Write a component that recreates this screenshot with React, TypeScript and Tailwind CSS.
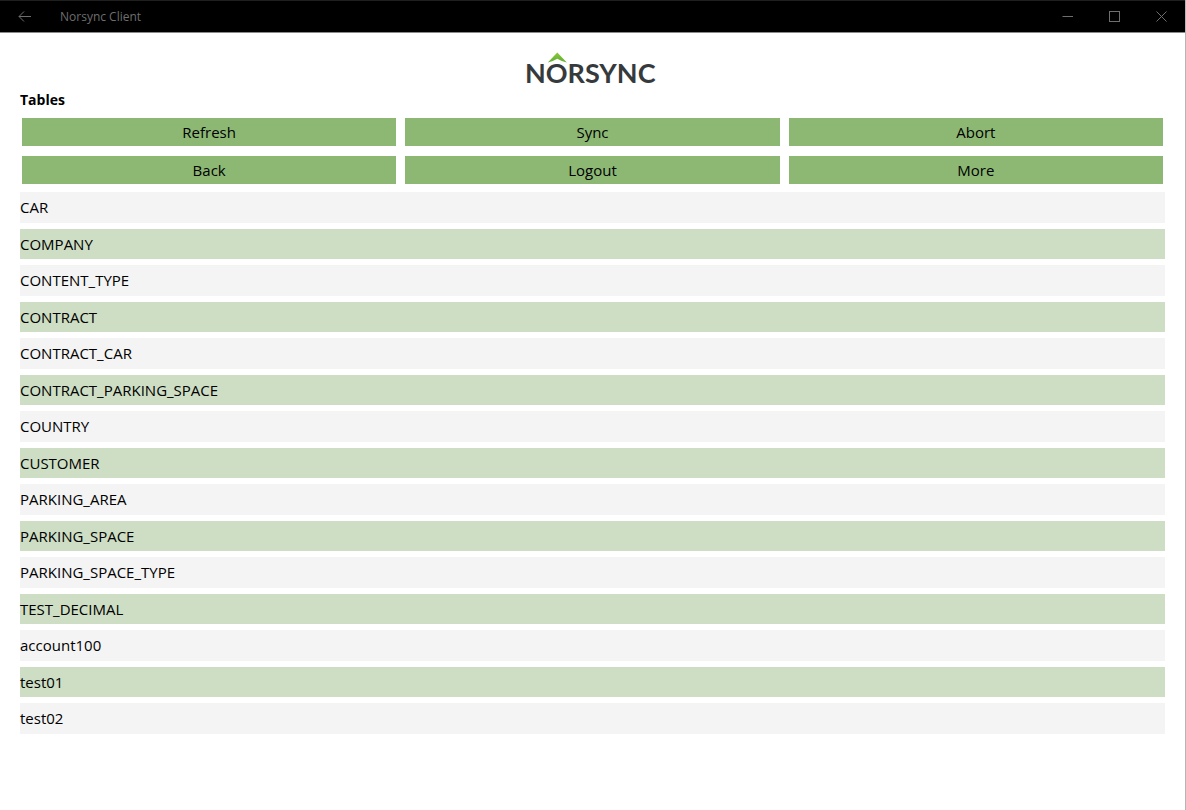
import React from 'react';

const actions = ['Refresh', 'Sync', 'Abort', 'Back', 'Logout', 'More'];

const tables = [
  'CAR',
  'COMPANY',
  'CONTENT_TYPE',
  'CONTRACT',
  'CONTRACT_CAR',
  'CONTRACT_PARKING_SPACE',
  'COUNTRY',
  'CUSTOMER',
  'PARKING_AREA',
  'PARKING_SPACE',
  'PARKING_SPACE_TYPE',
  'TEST_DECIMAL',
  'account100',
  'test01',
  'test02',
];

const TitleBar: React.FC = () => (
  <header className="flex h-[33px] items-center border-t border-b border-t-[#1f1f1f] border-b-[#8a8a8a] bg-black text-[#6e6e6e]">
    <button type="button" aria-label="Back" className="flex h-full w-12 items-center justify-center">
      <svg width="13" height="11" viewBox="0 0 13 11" fill="none" stroke="currentColor">
        <path d="M13 5.5H1M6 0.5L1 5.5l5 5" />
      </svg>
    </button>
    <span className="ml-3 flex-1 text-xs">Norsync Client</span>
    <button type="button" aria-label="Minimize" className="flex h-full w-[47px] items-center justify-center">
      <svg width="11" height="11" viewBox="0 0 11 11" fill="none" stroke="currentColor">
        <path d="M0.5 5.5h10.5" />
      </svg>
    </button>
    <button type="button" aria-label="Maximize" className="flex h-full w-[47px] items-center justify-center">
      <svg width="11" height="11" viewBox="0 0 11 11" fill="none" stroke="currentColor">
        <rect x="0.5" y="0.5" width="10" height="10" />
      </svg>
    </button>
    <button type="button" aria-label="Close" className="flex h-full w-[47px] items-center justify-center">
      <svg width="11" height="11" viewBox="0 0 11 11" fill="none" stroke="currentColor">
        <path d="M0.5 0.5l10 10M10.5 0.5l-10 10" />
      </svg>
    </button>
  </header>
);

const Logo: React.FC = () => (
  <svg width="140" height="36" viewBox="0 0 140 36" role="img" aria-label="Norsync">
    <defs>
      <linearGradient id="roof" x1="0" y1="0" x2="0" y2="1">
        <stop offset="0" stopColor="#8cc63f" />
        <stop offset="1" stopColor="#5fae2e" />
      </linearGradient>
    </defs>
    <text x="2" y="31" className="fill-[#363a3d] font-['Lato',sans-serif] text-[27px] font-bold">
      NORSYNC
    </text>
    <path d="M24.8 10.6L34.3 0.6L43.8 10.6Q38.5 9.4 34.3 6.8Q30 9.4 24.8 10.6Z" fill="url(#roof)" />
  </svg>
);

export default function App() {
  return (
    <div className="flex min-h-screen flex-col border-r border-[#b5b5b8] bg-white font-['Open_Sans','Noto_Sans',sans-serif] text-black">
      <TitleBar />
      <main className="px-5 pt-[19px]">
        <div className="flex justify-center">
          <Logo />
        </div>
        <h1 className="text-sm leading-6 font-bold">Tables</h1>
        <div className="mt-1.5 grid grid-cols-3 gap-x-[9px] gap-y-2.5 px-[2px]">
          {actions.map((label) => (
            <button key={label} type="button" className="h-7 bg-[#8cb874] text-[15px]">
              {label}
            </button>
          ))}
        </div>
        <ul className="mt-2 flex flex-col gap-1.5 text-[15px]">
          {tables.map((name) => (
            <li key={name} className="bg-[#cddec4] leading-[30px] odd:bg-[#f4f4f4] odd:leading-[31px]">
              {name}
            </li>
          ))}
        </ul>
      </main>
    </div>
  );
}
